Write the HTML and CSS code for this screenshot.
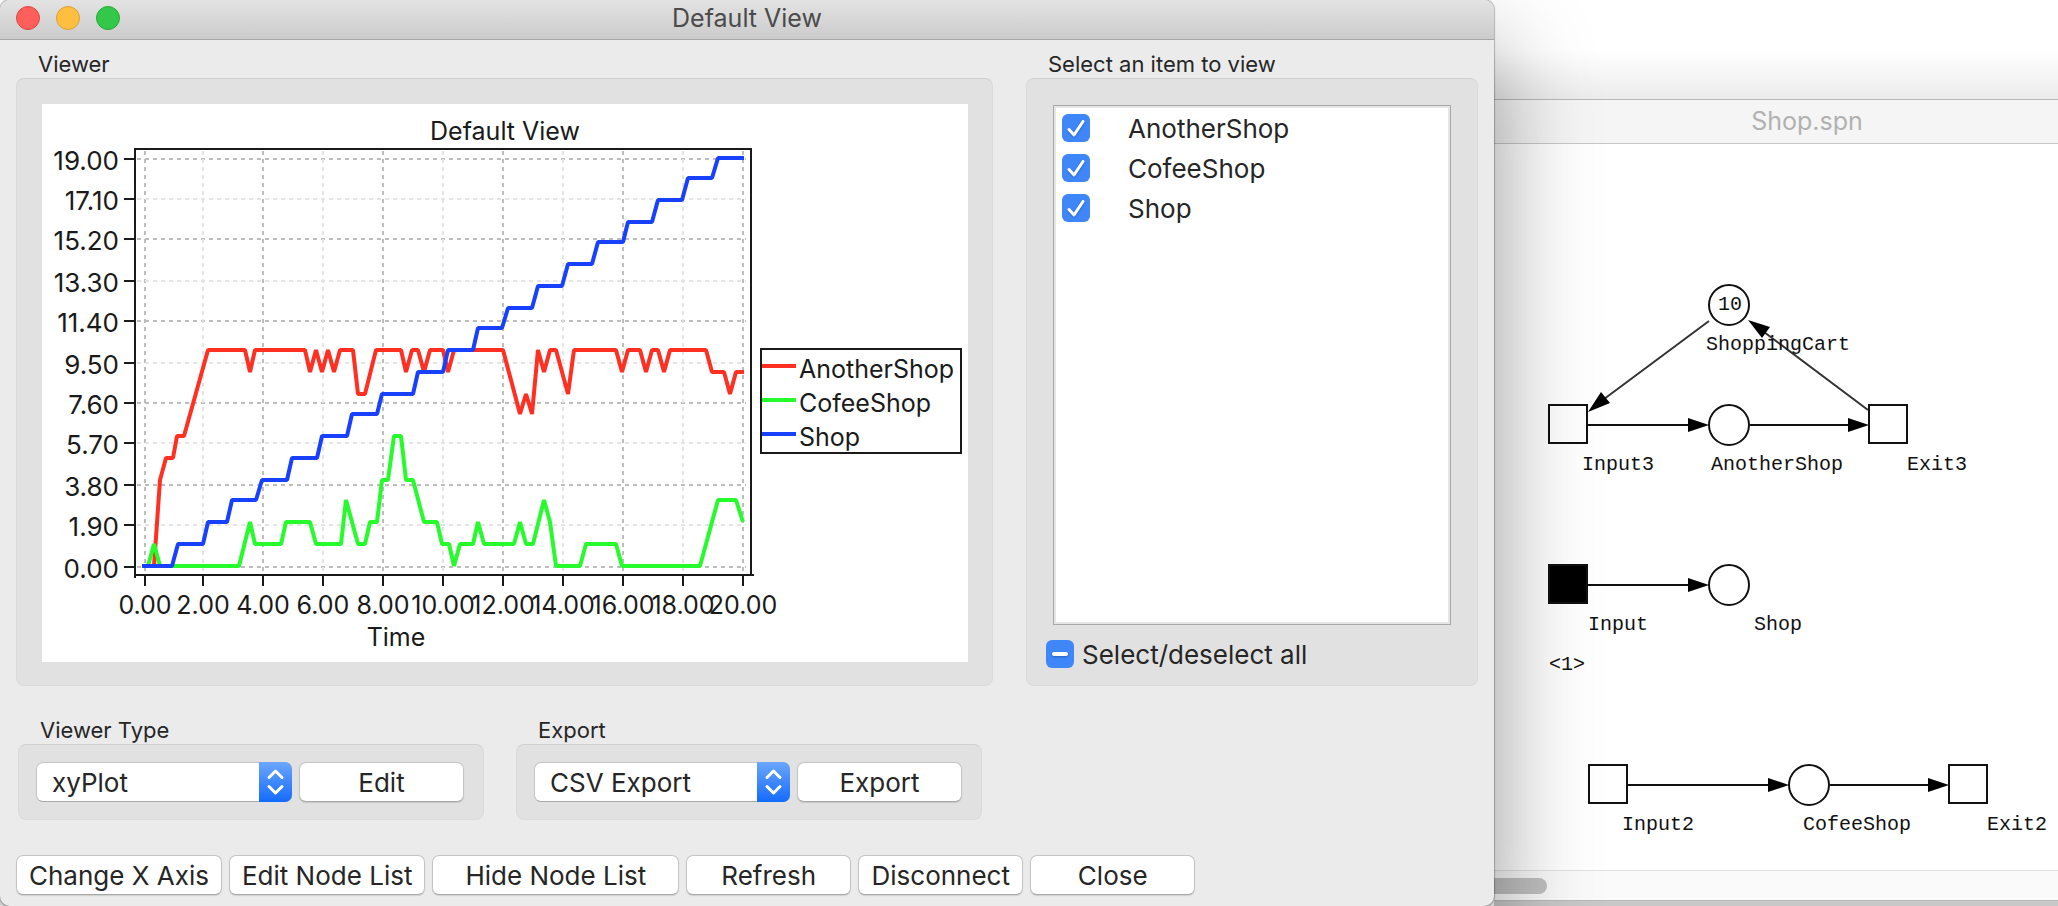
FILE: index.html
```html
<!DOCTYPE html>
<html lang="en">
<head>
<meta charset="utf-8">
<title>Default View</title>
<link rel="stylesheet" href="styles.css">
</head>
<body>
<main class="desktop">
  <section class="dialog">
    <header class="titlebar">
      <div class="lights">
        <button class="light light-close" aria-label="Close window"></button>
        <button class="light light-min" aria-label="Minimize window"></button>
        <button class="light light-zoom" aria-label="Zoom window"></button>
      </div>
      <h1 class="title">Default View</h1>
    </header>
    <div class="content">
      <div class="top">
        <section class="group">
          <h2 class="group-label">Viewer</h2>
          <div class="panel viewer">
            <svg class="chart" viewBox="42 104 926 558" role="img" aria-label="Default View plot">
              <g class="grid-dark">
                <path d="M145 151V574M263 151V574M383 151V574M503 151V574M623 151V574M743 151V574"/>
                <path d="M137 159H746M137 239H746M137 321H746M137 403H746M137 485H746M137 567H746"/>
              </g>
              <g class="grid-light">
                <path d="M203 151V574M323 151V574M443 151V574M563 151V574M683 151V574"/>
                <path d="M137 199H746M137 281H746M137 363H746M137 443H746M137 525H746"/>
              </g>
              <g class="frame">
                <path d="M135 578V149H751V575M134 575H754"/>
                <path d="M124 159h10M124 199h10M124 239h10M124 281h10M124 321h10M124 363h10M124 403h10M124 443h10M124 485h10M124 525h10M124 567h10"/>
                <path d="M145 576v10M203 576v10M263 576v10M323 576v10M383 576v10M443 576v10M503 576v10M563 576v10M623 576v10M683 576v10M743 576v10"/>
              </g>
              <g class="series">
                <polyline class="red" points="143,566 154,566 160,480 166,458 173,458 177,436 184,436 208,350 245,350 250,372 255,350 305,350 310,372 316,350 322,372 328,350 334,372 340,350 353,350 358,394 365,394 376,350 401,350 406,372 412,350 418,350 424,372 430,350 443,350 448,372 454,350 503,350 520,414 526,394 532,414 538,350 544,372 550,350 556,350 568,394 574,350 616,350 622,372 628,350 640,350 646,372 652,350 658,350 664,372 670,350 706,350 712,372 724,372 730,394 736,372 744,372"/>
                <polyline class="green" points="143,566 148,566 154,544 160,566 239,566 250,522 255,544 281,544 286,522 310,522 316,544 341,544 346,500 358,544 365,544 370,522 377,522 382,480 388,480 394,436 401,436 406,480 413,480 424,522 437,522 442,544 449,544 454,566 460,544 473,544 478,522 484,544 514,544 520,522 526,544 533,544 544,500 550,522 556,566 580,566 586,544 616,544 622,566 700,566 718,500 736,500 743,522"/>
                <polyline class="blue" points="142,566 172,566 178,544 203,544 208,522 227,522 232,500 256,500 262,480 287,480 292,458 317,458 322,436 347,436 352,414 377,414 382,394 413,394 418,372 443,372 448,350 473,350 478,328 502,328 508,308 532,308 538,286 562,286 568,264 592,264 598,242 623,242 628,222 652,222 658,200 682,200 688,178 712,178 718,158 744,158"/>
              </g>
              <g class="plot-text end">
                <text x="119" y="170">19.00</text><text x="119" y="210">17.10</text><text x="119" y="250">15.20</text><text x="119" y="292">13.30</text><text x="119" y="332">11.40</text><text x="119" y="374">9.50</text><text x="119" y="414">7.60</text><text x="119" y="454">5.70</text><text x="119" y="496">3.80</text><text x="119" y="536">1.90</text><text x="119" y="578">0.00</text>
              </g>
              <g class="plot-text middle">
                <text x="145" y="614">0.00</text><text x="203" y="614">2.00</text><text x="263" y="614">4.00</text><text x="323" y="614">6.00</text><text x="383" y="614">8.00</text><text x="443" y="614">10.00</text><text x="503" y="614">12.00</text><text x="563" y="614">14.00</text><text x="623" y="614">16.00</text><text x="683" y="614">18.00</text><text x="743" y="614">20.00</text>
                <text x="396" y="646">Time</text>
                <text x="505" y="140">Default View</text>
              </g>
              <rect class="legend-box" x="761" y="349" width="200" height="104"/>
              <g class="series"><path class="red" d="M762 366h34"/><path class="green" d="M762 400h34"/><path class="blue" d="M762 434h34"/></g>
              <g class="plot-text legend">
                <text x="799" y="378">AnotherShop</text><text x="799" y="412">CofeeShop</text><text x="799" y="446">Shop</text>
              </g>
            </svg>
          </div>
        </section>
        <section class="group">
          <h2 class="group-label">Select an item to view</h2>
          <div class="panel items">
            <ul class="list">
              <li><label class="item"><span class="check"><input type="checkbox" checked><svg viewBox="0 0 28 28"><path d="M7 15.500L12 21L21 7.500"/></svg></span>AnotherShop</label></li>
              <li><label class="item"><span class="check"><input type="checkbox" checked><svg viewBox="0 0 28 28"><path d="M7 15.500L12 21L21 7.500"/></svg></span>CofeeShop</label></li>
              <li><label class="item"><span class="check"><input type="checkbox" checked><svg viewBox="0 0 28 28"><path d="M7 15.500L12 21L21 7.500"/></svg></span>Shop</label></li>
            </ul>
            <label class="all"><span class="check"><input type="checkbox" aria-checked="mixed"><svg viewBox="0 0 28 28"><path class="dash" d="M8 14H20"/></svg></span>Select/deselect all</label>
          </div>
        </section>
      </div>
      <div class="options">
        <section class="group">
          <h2 class="group-label"><label for="type">Viewer Type</label></h2>
          <div class="panel controls">
            <div class="popup">
              <select id="type"><option>xyPlot</option></select>
              <svg class="stepper" viewBox="0 0 33 40"><path d="M10 15.500L16.500 9L23 15.500M10 24.500L16.500 31L23 24.500"/></svg>
            </div>
            <button class="button">Edit</button>
          </div>
        </section>
        <section class="group">
          <h2 class="group-label"><label for="export">Export</label></h2>
          <div class="panel controls">
            <div class="popup">
              <select id="export"><option>CSV Export</option></select>
              <svg class="stepper" viewBox="0 0 33 40"><path d="M10 15.500L16.500 9L23 15.500M10 24.500L16.500 31L23 24.500"/></svg>
            </div>
            <button class="button">Export</button>
          </div>
        </section>
      </div>
      <div class="actions">
        <button class="button">Change X Axis</button>
        <button class="button">Edit Node List</button>
        <button class="button wide">Hide Node List</button>
        <button class="button">Refresh</button>
        <button class="button">Disconnect</button>
        <button class="button">Close</button>
      </div>
    </div>
  </section>
  <div class="behind">
    <section class="editor">
      <header class="editor-title"><h2>Shop.spn</h2></header>
      <svg class="net" viewBox="1494 144 564 726" preserveAspectRatio="xMinYMin meet" role="img" aria-label="Petri net">
        <g class="shape">
          <circle cx="1729" cy="305" r="20"/><circle cx="1729" cy="425" r="20"/><circle cx="1729" cy="585" r="20"/><circle cx="1809" cy="785" r="20"/>
          <rect x="1549" y="405" width="38" height="38"/><rect x="1869" y="405" width="38" height="38"/>
          <rect class="solid" x="1549" y="565" width="38" height="38"/>
          <rect x="1589" y="765" width="38" height="38"/><rect x="1949" y="765" width="38" height="38"/>
          <path d="M1588 425H1700M1750 425H1860M1588 585H1700M1628 785H1780M1830 785H1940"/>
          <path class="thin" d="M1709 321L1596 405M1868 410L1756 326"/>
        </g>
        <path d="M1709 425L1688 418V432ZM1869 425L1848 418V432ZM1709 585L1688 578V592ZM1789 785L1768 778V792ZM1949 785L1928 778V792ZM1588 412L1601 392L1610 403ZM1748 320L1770 327L1762 338Z"/>
        <g class="net-text">
          <text x="1718" y="310">10</text>
          <text x="1706" y="350">ShoppingCart</text>
          <text x="1582" y="470">Input3</text><text x="1711" y="470">AnotherShop</text><text x="1907" y="470">Exit3</text>
          <text x="1588" y="630">Input</text><text x="1754" y="630">Shop</text><text x="1549" y="670">&lt;1&gt;</text>
          <text x="1622" y="830">Input2</text><text x="1803" y="830">CofeeShop</text><text x="1987" y="830">Exit2</text>
        </g>
      </svg>
      <div class="scrollbar"><div class="thumb"></div></div>
    </section>
  </div>
</main>
</body>
</html>
```
FILE: styles.css
```css
* { box-sizing: border-box; }
body {
  margin: 0;
  background: #fff;
  color: #262626;
  font-family: Inter, "Liberation Sans", sans-serif;
  font-size: 26px;
}
h1, h2, ul { margin: 0; padding: 0; font-weight: 400; list-style: none; }
button, select, input { margin: 0; font: inherit; color: inherit; }

.desktop {
  display: grid;
  grid-template-columns: 1494fr 564fr;
  min-height: 100vh;
  overflow: hidden;
}

/* Front window */
.dialog {
  position: relative;
  z-index: 1;
  display: flex;
  flex-direction: column;
  background: #ebebeb;
  border-radius: 10px;
  box-shadow: 0 0 1px 1px rgba(0, 0, 0, .25), 0 50px 100px rgba(0, 0, 0, .42);
}
.titlebar {
  display: grid;
  grid-template-columns: 1fr auto 1fr;
  align-items: center;
  height: 40px;
  padding: 0 16px 3px;
  background: linear-gradient(#e3e3e3, #cbcbcb);
  border-bottom: 1px solid #a6a6a6;
  border-radius: 10px 10px 0 0;
}
.lights { display: flex; gap: 16px; }
.light { width: 24px; height: 24px; padding: 0; border: 1px solid; border-radius: 50%; }
.light-close { background: #fe5f5a; border-color: #e24640; }
.light-min { background: #febe40; border-color: #dfa034; }
.light-zoom { background: #34c84a; border-color: #27aa35; }
.title { font-size: 25px; line-height: 32px; color: #4b4b4b; }

.content {
  flex: 1;
  display: flex;
  flex-direction: column;
  padding: 10px 16px 11px;
}
.top {
  flex: 1;
  display: grid;
  grid-template-columns: 977fr 452fr;
  gap: 33px;
}
.group { display: flex; flex-direction: column; min-width: 0; }
.group-label { padding-left: 22px; font-size: 22px; line-height: 28px; }
.panel {
  flex: 1;
  min-height: 0;
  background: #e1e1e1;
  border: 1px solid #dadada;
  border-top-color: #d0d0d0;
  border-radius: 8px;
}
.viewer { display: flex; padding: 25px 24px 23px 25px; }
.chart { display: block; width: 100%; height: 100%; background: #fff; }
.grid-dark, .grid-light { fill: none; stroke-width: 2; stroke-dasharray: 4 4; }
.grid-dark { stroke: #bdbdbd; }
.grid-light { stroke: #e4e4e4; }
.frame, .legend-box { fill: none; stroke: #1a1a1a; stroke-width: 2; }
.series { fill: none; stroke-width: 4; stroke-linejoin: bevel; }
.red { stroke: #ff3022; }
.green { stroke: #26fb2c; }
.blue { stroke: #1740ff; }
.plot-text { font-size: 26px; fill: #1a1a1a; }
.end { text-anchor: end; }
.middle { font-size: 25px; text-anchor: middle; }
.legend { font-size: 25px; }

.items { display: flex; flex-direction: column; gap: 15px; padding: 26px 19px 17px; }
.list {
  flex: 1;
  margin: 0 7px;
  padding-top: 2px;
  background: #fff;
  border: 1px solid #a8a8a8;
  box-shadow: inset 0 0 0 2px #e6e6e6;
}
.item, .all { display: flex; align-items: center; }
.item { gap: 38px; height: 40px; padding-left: 8px; }
.all { gap: 8px; height: 28px; }
.check { display: grid; width: 28px; height: 28px; }
.check input {
  grid-area: 1 / 1;
  appearance: none;
  width: 28px;
  height: 28px;
  background: #3f87f8;
  border-radius: 6px;
}
.check svg {
  grid-area: 1 / 1;
  fill: none;
  stroke: #fff;
  stroke-width: 3;
  stroke-linecap: round;
  stroke-linejoin: round;
  pointer-events: none;
  filter: drop-shadow(0 1px 1px rgba(0, 40, 120, .4));
}
.check .dash { stroke-width: 4; }

.options { display: flex; gap: 32px; margin-top: 30px; padding-left: 2px; }
.controls { display: flex; gap: 7px; padding: 17px 19px 17px 17px; }
.popup { position: relative; width: 256px; }
.popup select {
  appearance: none;
  display: block;
  width: 100%;
  height: 40px;
  padding: 0 40px 0 15px;
  background: #fff;
  border: 1px solid #c4c4c4;
  border-bottom-color: #a8a8a8;
  border-radius: 7px;
}
.stepper {
  position: absolute;
  top: 0;
  right: 0;
  width: 33px;
  height: 40px;
  background: linear-gradient(#6ba6fb, #136bff);
  border-radius: 0 7px 7px 0;
  fill: none;
  stroke: #fff;
  stroke-width: 3;
  stroke-linecap: round;
  stroke-linejoin: round;
  pointer-events: none;
}
.button {
  min-width: 165px;
  height: 40px;
  padding: 0 12px;
  background: #fff;
  border: 1px solid #c4c4c4;
  border-bottom-color: #a8a8a8;
  border-radius: 7px;
  box-shadow: 0 1px 1px rgba(0, 0, 0, .12);
  white-space: nowrap;
}
.wide { padding: 0 32px; }
.actions { display: flex; gap: 7px; margin-top: 35px; }

/* Window behind */
.behind {
  display: flex;
  flex-direction: column;
  padding: 99px 0 5px;
  background: linear-gradient(#fff, #fff 50px, #ececec 99px, #c8c8c8 100px);
}
.editor {
  flex: 1;
  display: flex;
  flex-direction: column;
  background: #fff;
  border: 1px solid #b8b8b8;
  border-width: 1px 0;
}
.editor-title {
  padding-left: 62px;
  background: #f5f5f5;
  border-bottom: 1px solid #c8c8c8;
  text-align: center;
}
.editor-title h2 { font-size: 25px; line-height: 43px; color: #b1b1b1; }
.net { flex: 1; display: block; width: 100%; min-height: 0; }
.shape { fill: #fff; fill-opacity: 0; stroke: #111; stroke-width: 2; }
.shape .solid { fill: #000; fill-opacity: 1; }
.thin { stroke: #333; }
.net-text { font-family: "Liberation Mono", monospace; font-size: 20px; fill: #111; }
.scrollbar {
  height: 30px;
  padding: 7px 0;
  background: #fafafa;
  border-top: 1px solid #e2e2e2;
}
.thumb { width: 53px; height: 16px; background: #c1c1c1; border-radius: 0 8px 8px 0; }
```
